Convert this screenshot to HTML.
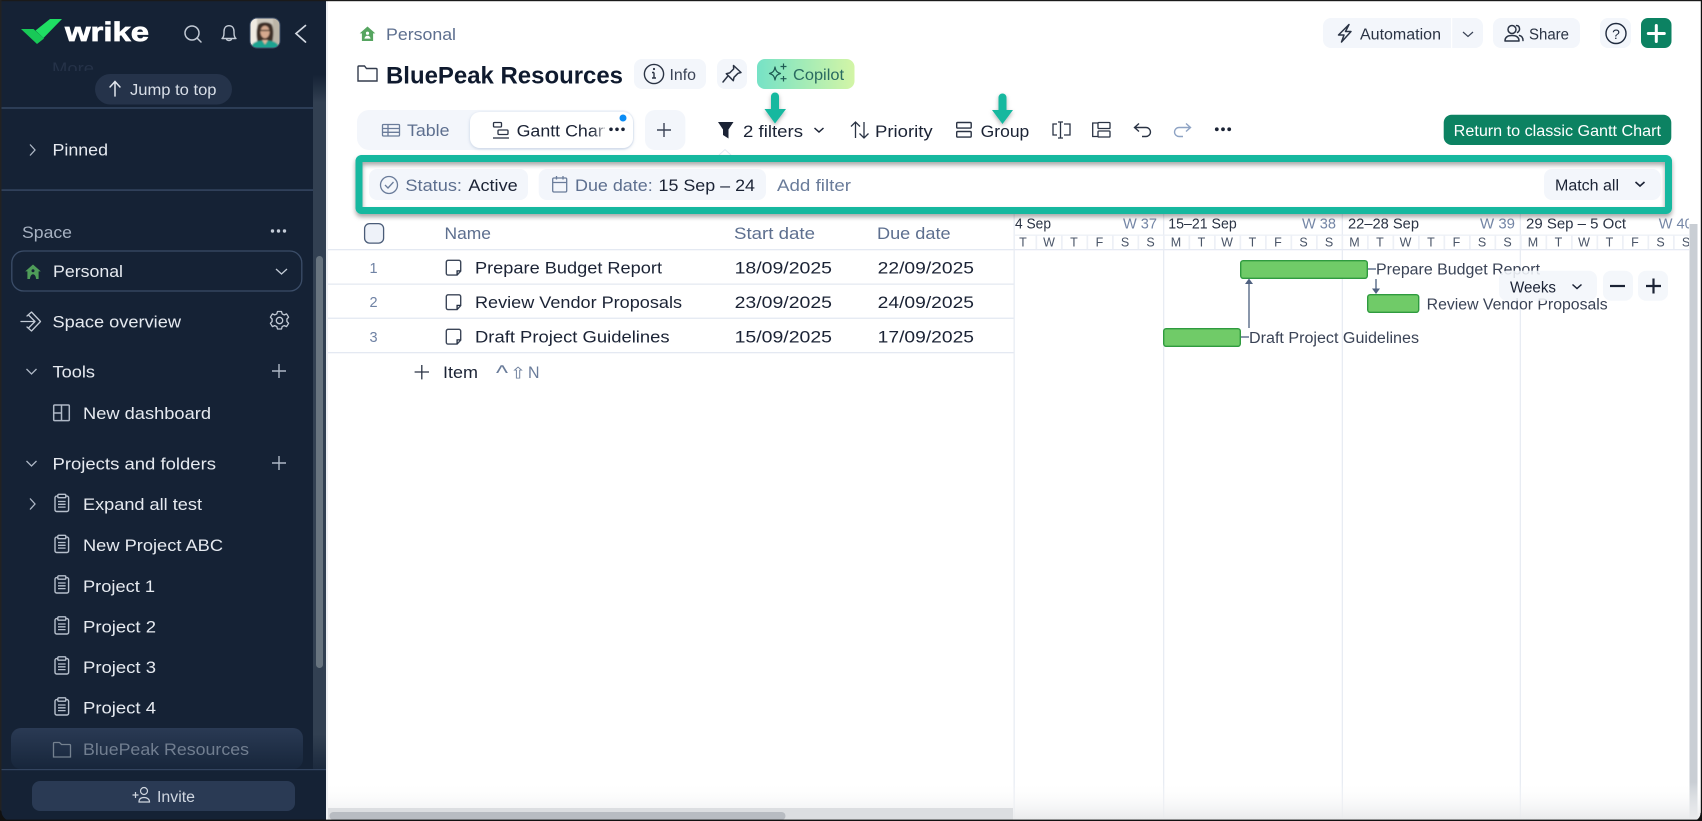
<!DOCTYPE html>
<html><head><meta charset="utf-8"><title>BluePeak Resources</title>
<style>
html,body{margin:0;padding:0;background:#111;width:1702px;height:821px;overflow:hidden}
svg{display:block}
text{font-family:"Liberation Sans","DejaVu Sans",sans-serif;font-size:16.6px;fill:#1b2335}
.s{fill:#e6eaf0}
.m{fill:#5d6f8f}
.d{font-size:12.5px;fill:#4a5568;text-anchor:middle}
.h{font-size:14.5px;fill:#2a3344}
.w{font-size:14.5px;fill:#7486a6}
.g{font-size:15.5px;fill:#3a4356}
.ic{fill:none;stroke:#2a3344;stroke-width:1.5;stroke-linecap:round;stroke-linejoin:round}
.num{fill:#6f82a4;font-size:14.5px;text-anchor:middle}
</style></head><body>
<svg width="1702" height="821" viewBox="0 0 1702 821" xmlns="http://www.w3.org/2000/svg">
<defs>
<symbol id="clip" width="16" height="19" viewBox="0 0 16 19" overflow="visible">
<rect x="1" y="2.6" width="13.6" height="15.4" rx="1.6" fill="none" stroke="#b7c0cd" stroke-width="1.4"/>
<rect x="3.8" y=".8" width="8" height="3.4" rx="1" fill="#152235" stroke="#b7c0cd" stroke-width="1.4"/>
<path d="M4 8h7.6M4 10.8h7.6M4 13.6h7.6" stroke="#b7c0cd" stroke-width="1.3"/>
</symbol>
<symbol id="note" width="17" height="17" viewBox="0 0 17 17" overflow="visible">
<path d="M2.6.8H13.4a1.8 1.8 0 0 1 1.8 1.8V11.600L11.600 15.600H2.600A1.800 1.800 0 0 1 .8 13.800V2.600A1.800 1.800 0 0 1 2.600.8Z" fill="none" stroke="#3c4658" stroke-width="1.400"/>
<path d="M15 11.400H11.600V15.400" fill="none" stroke="#1f2a3e" stroke-width="1.300"/>
</symbol>
<symbol id="house" width="16" height="16" viewBox="0 0 16 16" overflow="visible">
<path d="M8 .5 15.800 7.400H13.600V15H2.400V7.400H.2Z" fill="#56a560"/>
<circle cx="8" cy="7.200" r="1.600" fill="#fff"/><path d="M4.900 12.600c.4-2 1.600-2.900 3.100-2.900s2.700.9 3.100 2.900Z" fill="#fff"/>
</symbol>
<symbol id="house2" width="16" height="16" viewBox="0 0 16 16" overflow="visible">
<path d="M8 .5 15.800 7.400H13.600V15H2.400V7.400H.2Z" fill="#4f9d59"/>
<circle cx="8" cy="6.800" r="1.500" fill="#152235"/><path d="M4.900 15c.3-3 1.500-4.800 3.100-4.800s2.800 1.800 3.100 4.800Z" fill="#152235"/>
</symbol>
<pattern id="days" patternUnits="userSpaceOnUse" x="1163" y="0" width="25.500" height="10"><rect width="1.700" height="10" fill="#edf0f6"/></pattern>
<linearGradient id="cop" x1="0" x2="1" y1="0" y2="0"><stop offset="0" stop-color="#76e2c6"/><stop offset="1" stop-color="#d3f5a6"/></linearGradient>
<linearGradient id="trk" x1="0" x2="0" y1="0" y2="1"><stop offset="0" stop-color="#152235"/><stop offset=".04" stop-color="#324052"/><stop offset=".95" stop-color="#324052"/><stop offset="1" stop-color="#1c2a3e"/></linearGradient>
<linearGradient id="sel" x1="0" x2="0" y1="0" y2="1"><stop offset="0" stop-color="#2a3a54"/><stop offset="1" stop-color="#17263b"/></linearGradient>
<linearGradient id="fade" x1="0" x2="1" y1="0" y2="0"><stop offset="0" stop-color="#fff" stop-opacity="0"/><stop offset="1" stop-color="#fff"/></linearGradient>
<linearGradient id="bot" x1="0" x2="0" y1="0" y2="1"><stop offset="0" stop-color="#fff" stop-opacity="0"/><stop offset="1" stop-color="#e9eaec"/></linearGradient>
<clipPath id="gc"><rect x="1014" y="214" width="675" height="40"/></clipPath>
<clipPath id="more"><rect x="40" y="62" width="80" height="9"/></clipPath>
<clipPath id="av"><rect x="250" y="18" width="30" height="30" rx="7"/></clipPath>
<filter id="sh" x="-5%" y="-30%" width="110%" height="170%"><feDropShadow dx="0" dy="3" stdDeviation="2.500" flood-color="#000" flood-opacity=".35"/></filter>
<filter id="sh2" x="-50%" y="-30%" width="200%" height="170%"><feDropShadow dx="0" dy="2" stdDeviation="2" flood-color="#000" flood-opacity=".3"/></filter>
<filter id="tb" x="-5%" y="-10%" width="110%" height="125%"><feDropShadow dx="0" dy="1" stdDeviation="1.500" flood-color="#8aa0c4" flood-opacity=".45"/></filter>
<filter id="bl"><feGaussianBlur stdDeviation=".7"/></filter>
</defs>

<rect x="1" y="1" width="1700" height="819" fill="#fff"/>

<!-- Sidebar -->
<rect x="1.500" y="1" width="325" height="819" fill="#152235"/>
<rect x="326" y="1" width="2" height="819" fill="#eef0f3"/>
<rect x="313" y="75" width="13" height="694" fill="url(#trk)"/>
<rect x="316" y="256" width="7" height="412" rx="3.500" fill="#68747f"/>
<path d="M21 29H33.500L44 38.500 37 44Z" fill="#18c957"/>
<path d="M50 19H62L43.500 38 35.500 30.500Z" fill="#1fdf63"/>
<text x="65" y="41" textLength="84" lengthAdjust="spacingAndGlyphs" style="font-size:27px;font-weight:700;fill:#fff;stroke:#fff;stroke-width:.7">wrike</text>
<circle cx="192" cy="33" r="7" fill="none" stroke="#c2cad5" stroke-width="1.500"/><path d="M197 38 201 42" stroke="#c2cad5" stroke-width="1.500" stroke-linecap="round"/>
<path d="M222 38.500c2-1.500 2-4 2-7 0-3.500 1.800-5.800 5-5.800s5 2.300 5 5.800c0 3 0 5.500 2 7ZM226.500 39c.4 2 4.600 2 5 0" fill="none" stroke="#c2cad5" stroke-width="1.400" stroke-linejoin="round"/>
<g clip-path="url(#av)"><g filter="url(#bl)">
<rect x="248" y="16" width="34" height="34" fill="#cfc9bd"/>
<rect x="248" y="16" width="9" height="34" fill="#efeae2"/>
<rect x="273" y="16" width="8" height="34" fill="#bdb6a8"/>
<path d="M258 44c-2-8-2-14 0-19 2-3.500 12-3.500 14 0 2 5 1.500 11 0 19Z" fill="#3d2d25"/>
<ellipse cx="265" cy="32" rx="4.600" ry="6.200" fill="#d6a98e"/>
<path d="M260.500 30.500h9" stroke="#2b2018" stroke-width="1.200"/>
<path d="M250 50c1-8 7-9.500 15-9.500S279 42 280 50Z" fill="#1fa391"/>
<path d="M262 40 265 44.500l3-4.500Z" fill="#e2b89d"/>
</g></g>
<rect x="250" y="18" width="30" height="30" rx="7" fill="none" stroke="#3d4d66" stroke-width="1"/>
<path d="M305.500 25.500 296 33.500l9.500 8.500" fill="none" stroke="#d3d9e2" stroke-width="1.700" stroke-linecap="round"/>

<g clip-path="url(#more)"><text x="52" y="74" textLength="42" lengthAdjust="spacingAndGlyphs" style="fill:#253248">More</text></g>
<rect x="95" y="74" width="137" height="30.500" rx="15.200" fill="#25334a"/>
<path d="M115 96V82M110 87l5-5.500 5 5.500" fill="none" stroke="#e2e6ed" stroke-width="1.500" stroke-linecap="round"/>
<text class="s" x="130" y="95" textLength="86.500" lengthAdjust="spacingAndGlyphs" style="font-size:15.400px;fill:#d9dfe8">Jump to top</text>
<rect x="1.500" y="107.200" width="311.500" height="1.600" fill="#33445f"/>
<path d="M30 144.500 35 150l-5 5.500" fill="none" stroke="#aeb8c6" stroke-width="1.300"/>
<text class="s" x="52.500" y="155.500" textLength="55.500" lengthAdjust="spacingAndGlyphs">Pinned</text>
<rect x="1.500" y="189.300" width="311.500" height="1.600" fill="#33445f"/>
<text x="22" y="238" textLength="50" lengthAdjust="spacingAndGlyphs" style="fill:#a7b2c2">Space</text>
<circle cx="272.500" cy="231" r="1.700" fill="#c4ccd8"/><circle cx="278.500" cy="231" r="1.700" fill="#c4ccd8"/><circle cx="284.500" cy="231" r="1.700" fill="#c4ccd8"/>
<rect x="11.800" y="251" width="290" height="40" rx="12" fill="none" stroke="#3b4d68" stroke-width="1.300"/>
<use href="#house2" x="25" y="264"/>
<text class="s" x="53" y="277" textLength="70" lengthAdjust="spacingAndGlyphs">Personal</text>
<path d="M276 269l5.500 5 5.500-5" fill="none" stroke="#c2cad5" stroke-width="1.300"/>
<path d="M21 321.500H34.500M29 315.500l6 6-6 6M27 316 31.500 312 40.500 321.500 31.500 331 27 327" fill="none" stroke="#c2cad5" stroke-width="1.300" stroke-linejoin="round" stroke-linecap="round"/>
<text class="s" x="52.500" y="327.500" textLength="128.500" lengthAdjust="spacingAndGlyphs">Space overview</text>
<g fill="none" stroke="#c2cad5" stroke-width="1.300"><circle cx="279.500" cy="320.500" r="3.200"/><path d="M277.500 311.500h4l.7 2.400 2.100 1 2.300-1 2 3.300-1.700 1.800v2.500l1.700 1.800-2 3.300-2.300-1-2.100 1-.7 2.400h-4l-.7-2.400-2.100-1-2.300 1-2-3.300 1.700-1.800v-2.500l-1.700-1.800 2-3.300 2.300 1 2.100-1Z" stroke-linejoin="round"/></g>
<path d="M26.500 369l5 5 5-5" fill="none" stroke="#aeb8c6" stroke-width="1.300"/>
<text class="s" x="52.500" y="377.500" textLength="42.500" lengthAdjust="spacingAndGlyphs">Tools</text>
<path d="M272 371h14M279 364v14" stroke="#aeb8c6" stroke-width="1.400"/>
<g fill="none" stroke="#aeb8c6" stroke-width="1.500"><rect x="53.700" y="405" width="15.600" height="15.600" rx="1"/><path d="M61.500 405v15.600M53.700 413h7.800"/></g>
<text class="s" x="83" y="419" textLength="128" lengthAdjust="spacingAndGlyphs">New dashboard</text>
<path d="M26.500 461l5 5 5-5" fill="none" stroke="#aeb8c6" stroke-width="1.300"/>
<text class="s" x="52.500" y="469.500" textLength="163.500" lengthAdjust="spacingAndGlyphs">Projects and folders</text>
<path d="M272 463h14M279 456v14" stroke="#aeb8c6" stroke-width="1.400"/>
<path d="M30 498.500 35 504l-5 5.500" fill="none" stroke="#aeb8c6" stroke-width="1.300"/>
<use href="#clip" x="54" y="493.500"/><text class="s" x="83" y="510" textLength="119" lengthAdjust="spacingAndGlyphs">Expand all test</text>
<use href="#clip" x="54" y="534.500"/><text class="s" x="83" y="551" textLength="140" lengthAdjust="spacingAndGlyphs">New Project ABC</text>
<use href="#clip" x="54" y="575"/><text class="s" x="83" y="592" textLength="72" lengthAdjust="spacingAndGlyphs">Project 1</text>
<use href="#clip" x="54" y="616"/><text class="s" x="83" y="632.500" textLength="73" lengthAdjust="spacingAndGlyphs">Project 2</text>
<use href="#clip" x="54" y="656"/><text class="s" x="83" y="673" textLength="73" lengthAdjust="spacingAndGlyphs">Project 3</text>
<use href="#clip" x="54" y="697"/><text class="s" x="83" y="713.500" textLength="73" lengthAdjust="spacingAndGlyphs">Project 4</text>
<rect x="11" y="728" width="292" height="41" rx="10" fill="url(#sel)"/>
<path d="M53.500 757V743.500a1 1 0 0 1 1-1h5l2 2h8a1 1 0 0 1 1 1V757Z" fill="none" stroke="#74818f" stroke-width="1.300"/>
<text x="83" y="755" textLength="166" lengthAdjust="spacingAndGlyphs" style="fill:#717e90">BluePeak Resources</text>
<rect x="1.500" y="769" width="324.500" height="1.200" fill="#33445f"/>
<rect x="32" y="781" width="263" height="30" rx="8" fill="#2a3a54"/>
<path d="M132.500 795h6M135.500 792v6" stroke="#cfd5de" stroke-width="1.200"/><circle cx="144" cy="791" r="3.500" fill="none" stroke="#cfd5de" stroke-width="1.200"/><path d="M139 802c0-3 2-4.500 5-4.500s5.500 1.500 5.500 4.500Z" fill="none" stroke="#cfd5de" stroke-width="1.200"/>
<text x="157" y="802" textLength="38" lengthAdjust="spacingAndGlyphs" style="fill:#cfd6e0;font-size:15.500px">Invite</text>

<!-- Header -->
<use href="#house" x="359.500" y="26"/>
<text class="m" x="386" y="40" textLength="70" lengthAdjust="spacingAndGlyphs">Personal</text>
<path d="M358 81V67a1 1 0 0 1 1-1h5.500l2 2.500H376a1 1 0 0 1 1 1V81Z" fill="none" stroke="#333c4d" stroke-width="1.400"/>
<text x="386" y="83.500" textLength="237" lengthAdjust="spacingAndGlyphs" style="font-size:24.500px;font-weight:700;fill:#0f1a2e">BluePeak Resources</text>
<rect x="634" y="59" width="72" height="30" rx="8" fill="#f3f6fb"/>
<circle cx="654" cy="74" r="9.600" fill="none" stroke="#2a3344" stroke-width="1.400"/><path d="M654 72.500v5.500M652 72.500h2M652 78h4" stroke="#2a3344" stroke-width="1.400" fill="none"/><circle cx="654" cy="69" r="1.100" fill="#2a3344"/>
<text x="669.500" y="80" textLength="26.500" lengthAdjust="spacingAndGlyphs" style="font-size:15.500px;fill:#3a4356">Info</text>
<rect x="717" y="59" width="30" height="30" rx="8" fill="#f3f6fb"/>
<path d="M733.500 65.500l7.500 7-3 .8-4 4-.7 3.400-7-7 3.400-.8 4-4ZM727.500 76.500 723 82" class="ic" stroke-width="1.300"/>
<rect x="757" y="59" width="97.500" height="30" rx="8" fill="url(#cop)"/>
<path d="M775 67c.7 4 2 5.500 5.500 6.500-3.500 1-4.800 2.500-5.500 6.500-.7-4-2-5.500-5.500-6.500 3.500-1 4.800-2.500 5.500-6.500ZM783.500 63.500v6M780.500 66.500h6M783.500 76v5.500M780.500 78.700h6" fill="none" stroke="#1f5b54" stroke-width="1.200" stroke-linejoin="round"/>
<text x="793" y="80" textLength="51" lengthAdjust="spacingAndGlyphs" style="font-size:15.500px;fill:#2a6a60">Copilot</text>

<rect x="1323" y="18" width="160" height="30" rx="8" fill="#f3f6fb"/><rect x="1451" y="18" width="1.200" height="30" fill="#fff"/>
<path d="M1349 24.500 1338.500 35h5.500l-2.500 7 9.500-10.500h-5.500Z" class="ic" stroke-width="1.300"/>
<text x="1360" y="39.500" textLength="81" lengthAdjust="spacingAndGlyphs" style="font-size:15.500px;fill:#2a3344">Automation</text>
<path d="M1463 32l5 4.500 5-4.500" fill="none" stroke="#3a4356" stroke-width="1.200"/>
<rect x="1493" y="18" width="87" height="30" rx="8" fill="#f3f6fb"/>
<circle cx="1512" cy="29.500" r="4" class="ic" stroke-width="1.300"/><path d="M1505 41c0-4 3-5.500 7-5.500s7 1.500 7 5.500ZM1516.500 25.500c3 0 4.500 4.500 1 7M1519.500 35.500c2 .5 3.500 2 3.500 5" class="ic" stroke-width="1.300"/>
<text x="1529" y="39.500" textLength="40" lengthAdjust="spacingAndGlyphs" style="font-size:15.500px;fill:#2a3344">Share</text>
<rect x="1600" y="18" width="31" height="30" rx="8" fill="#f3f6fb"/>
<circle cx="1616" cy="33.500" r="10" fill="none" stroke="#1f2a3e" stroke-width="1.400"/>
<text x="1616" y="39" text-anchor="middle" style="font-size:14px;fill:#1f2a3e">?</text>
<rect x="1641" y="18" width="30.500" height="30" rx="7" fill="#0c8262"/>
<path d="M1656.300 25.500v16M1648.300 33.500h16" stroke="#fff" stroke-width="3" stroke-linecap="round"/>

<!-- Tabs + toolbar -->
<rect x="357" y="110" width="277" height="40" rx="12" fill="#f3f6fb"/>
<g fill="none" stroke="#6a7c9a" stroke-width="1.300"><rect x="382.500" y="124.500" width="17" height="11.500" rx="1"/><path d="M382.500 128.500h17M382.500 132.300h17M388 124.500V136"/></g>
<text x="407" y="136" textLength="42.500" lengthAdjust="spacingAndGlyphs" style="fill:#5d6f8f">Table</text>
<rect x="470" y="112" width="163" height="36" rx="10" fill="#fff" filter="url(#tb)"/>
<g fill="none" stroke="#2a3344" stroke-width="1.300"><rect x="493.500" y="122.500" width="8" height="4.500" rx="1"/><rect x="498" y="130" width="10" height="4.500" rx="1"/><path d="M493 138h16"/></g>
<text x="516.600" y="136.500" textLength="92" lengthAdjust="spacingAndGlyphs">Gantt Chart</text>
<rect x="592" y="122" width="18" height="20" fill="url(#fade)"/><rect x="605" y="120" width="22" height="22" fill="#fff"/>
<circle cx="611" cy="129.300" r="1.800" fill="#1b2335"/><circle cx="617" cy="129.300" r="1.800" fill="#1b2335"/><circle cx="623" cy="129.300" r="1.800" fill="#1b2335"/>
<circle cx="623" cy="118" r="3.500" fill="#0a8cf5"/>
<rect x="645" y="110" width="40.400" height="40" rx="10" fill="#f3f6fb"/>
<path d="M657 130h14M664 123v14" stroke="#3a4356" stroke-width="1.400"/>
<path d="M718 122H733.500L728.500 129.500V138.500L723 135V129.500Z" fill="#1b2335"/>
<text x="743" y="136.800" textLength="60" lengthAdjust="spacingAndGlyphs">2 filters</text>
<path d="M814.500 128l4.500 4 4.500-4" fill="none" stroke="#1b2335" stroke-width="1.500"/>
<path d="M855.500 138V122M851 126.500l4.500-4.500 4.500 4.500M864 122v16M859.500 133.500l4.500 4.500 4.500-4.500" fill="none" stroke="#2a3344" stroke-width="1.300"/>
<text x="875" y="136.800" textLength="57.700" lengthAdjust="spacingAndGlyphs">Priority</text>
<g fill="none" stroke="#2a3344" stroke-width="1.400"><rect x="956.700" y="122.500" width="14.500" height="5.600" rx="1"/><rect x="956.700" y="131.500" width="14.500" height="5.600" rx="1"/></g>
<text x="980.700" y="136.800" textLength="48.600" lengthAdjust="spacingAndGlyphs">Group</text>
<g fill="none" stroke="#2a3344" stroke-width="1.300"><path d="M1057 124h-4v11h4M1064 124h6v11h-6M1060.500 122v16M1058 122h5M1058 138h5"/></g>
<g fill="none" stroke="#2a3344" stroke-width="1.300"><path d="M1098 123h-5.300v13.500H1098"/><rect x="1098" y="122.500" width="12" height="6" rx=".8"/><rect x="1098" y="131" width="12" height="6" rx=".8"/></g>
<path d="M1139 123.500l-4.500 4 4.500 4M1135 127.500h11a4.500 4.500 0 0 1 0 9h-4" fill="none" stroke="#2a3344" stroke-width="1.400"/>
<path d="M1186 123.500l4.500 4-4.500 4M1190 127.500h-11a4.500 4.500 0 0 0 0 9h4" fill="none" stroke="#8ea3c4" stroke-width="1.400"/>
<circle cx="1216.800" cy="129.300" r="1.900" fill="#1b2335"/><circle cx="1223" cy="129.300" r="1.900" fill="#1b2335"/><circle cx="1229.200" cy="129.300" r="1.900" fill="#1b2335"/>
<rect x="1443.700" y="114.700" width="227.600" height="30.300" rx="8" fill="#0c8262"/>
<text x="1453.700" y="136" textLength="207.300" lengthAdjust="spacingAndGlyphs" style="font-size:15.400px;fill:#fff">Return to classic Gantt Chart</text>

<!-- Filter chips -->
<path d="M719 155 725 149.500 731 155" fill="#fff" stroke="#e4e9f2"/>
<rect x="369" y="169" width="159" height="31" rx="8" fill="#f3f6fb"/>
<circle cx="389" cy="185" r="8.500" fill="none" stroke="#6a7c9a" stroke-width="1.300"/><path d="M385 185l3 3 5.500-6" fill="none" stroke="#6a7c9a" stroke-width="1.300"/>
<text class="m" x="405.400" y="190.800" textLength="56.600" lengthAdjust="spacingAndGlyphs">Status:</text>
<text x="468.400" y="190.800" textLength="49.300" lengthAdjust="spacingAndGlyphs">Active</text>
<rect x="538.700" y="169" width="227.300" height="31" rx="8" fill="#f3f6fb"/>
<g fill="none" stroke="#6a7c9a" stroke-width="1.300"><rect x="552.700" y="178" width="14" height="14" rx="1.200"/><path d="M552.700 182.500h14M556.500 176v3.500M563 176v3.500"/></g>
<text class="m" x="575" y="190.800" textLength="77.700" lengthAdjust="spacingAndGlyphs">Due date:</text>
<text x="658.500" y="190.800" textLength="96.500" lengthAdjust="spacingAndGlyphs">15 Sep – 24</text>
<text class="m" x="777" y="190.800" textLength="74" lengthAdjust="spacingAndGlyphs" style="fill:#6a7c9a">Add filter</text>
<rect x="1544" y="169" width="116.700" height="31" rx="8" fill="#f3f6fb"/>
<text x="1555" y="190.300" textLength="64" lengthAdjust="spacingAndGlyphs" style="font-size:15.500px">Match all</text>
<path d="M1635.500 182l4.500 4 4.500-4" fill="none" stroke="#1b2335" stroke-width="1.600"/>

<!-- Table -->
<rect x="364.600" y="223.600" width="19" height="19.500" rx="5" fill="#eef2f9" stroke="#4a5c78" stroke-width="1.300"/>
<text class="m" x="444.500" y="238.800" textLength="46.500" lengthAdjust="spacingAndGlyphs">Name</text>
<text class="m" x="734" y="238.800" textLength="81" lengthAdjust="spacingAndGlyphs">Start date</text>
<text class="m" x="877" y="238.800" textLength="73.600" lengthAdjust="spacingAndGlyphs">Due date</text>
<g fill="#e4e9f2"><rect x="328" y="249" width="686" height="1.300"/><rect x="328" y="283.500" width="686" height="1.300"/><rect x="328" y="317.600" width="686" height="1.300"/><rect x="328" y="352" width="686" height="1.300"/></g>
<text class="num" x="373.500" y="272.800">1</text><text class="num" x="373.500" y="307.200">2</text><text class="num" x="373.500" y="342">3</text>
<use href="#note" x="445.500" y="259.500"/><use href="#note" x="445.500" y="294"/><use href="#note" x="445.500" y="328.500"/>
<text x="475" y="273.500" textLength="187" lengthAdjust="spacingAndGlyphs">Prepare Budget Report</text>
<text x="475" y="308" textLength="207" lengthAdjust="spacingAndGlyphs">Review Vendor Proposals</text>
<text x="475" y="342.500" textLength="194.600" lengthAdjust="spacingAndGlyphs">Draft Project Guidelines</text>
<text x="734.600" y="273.500" textLength="97.400" lengthAdjust="spacingAndGlyphs">18/09/2025</text><text x="877.700" y="273.500" textLength="96.300" lengthAdjust="spacingAndGlyphs">22/09/2025</text>
<text x="734.600" y="308" textLength="97.400" lengthAdjust="spacingAndGlyphs">23/09/2025</text><text x="877.700" y="308" textLength="96.300" lengthAdjust="spacingAndGlyphs">24/09/2025</text>
<text x="734.600" y="342.500" textLength="97.400" lengthAdjust="spacingAndGlyphs">15/09/2025</text><text x="877.700" y="342.500" textLength="96.300" lengthAdjust="spacingAndGlyphs">17/09/2025</text>
<path d="M414.600 372h14.400M421.800 365v14.400" stroke="#2a3344" stroke-width="1.300"/>
<text x="443" y="378" textLength="35" lengthAdjust="spacingAndGlyphs">Item</text>
<text x="496" y="380" textLength="12" lengthAdjust="spacingAndGlyphs" style="font-size:21px;fill:#6a7c9a">^</text>
<text x="510" y="378.500" textLength="16" lengthAdjust="spacingAndGlyphs" style="font-size:16px;fill:#6a7c9a">⇧</text>
<text x="528" y="378" textLength="11.500" lengthAdjust="spacingAndGlyphs" style="fill:#6a7c9a">N</text>

<!-- Gantt -->
<g fill="#e8ecf3">
<rect x="1013.500" y="214" width="1.300" height="606"/><rect x="1163" y="214" width="1.300" height="606"/><rect x="1341.700" y="214" width="1.300" height="606"/><rect x="1519.700" y="214" width="1.300" height="606"/>
</g>
<rect x="1014" y="234.500" width="675" height="1.300" fill="#edf0f6"/><rect x="1014" y="249" width="675" height="1.300" fill="#e6eaf3"/>
<rect x="1014" y="235" width="675" height="14" fill="url(#days)"/>
<g clip-path="url(#gc)">
<text class="h" x="1015" y="228.600" textLength="36" lengthAdjust="spacingAndGlyphs">4 Sep</text>
<text class="w" x="1123" y="228.600" textLength="34" lengthAdjust="spacingAndGlyphs">W 37</text>
<text class="h" x="1168.300" y="228.600" textLength="68.400" lengthAdjust="spacingAndGlyphs">15–21 Sep</text>
<text class="w" x="1302" y="228.600" textLength="34" lengthAdjust="spacingAndGlyphs">W 38</text>
<text class="h" x="1348" y="228.600" textLength="71" lengthAdjust="spacingAndGlyphs">22–28 Sep</text>
<text class="w" x="1480" y="228.600" textLength="35" lengthAdjust="spacingAndGlyphs">W 39</text>
<text class="h" x="1526" y="228.600" textLength="100" lengthAdjust="spacingAndGlyphs">29 Sep – 5 Oct</text>
<text class="w" x="1658.700" y="228.600" textLength="34" lengthAdjust="spacingAndGlyphs">W 40</text>
<text class="d" x="1023" y="246.500">T</text><text class="d" x="1049" y="246.500">W</text><text class="d" x="1074" y="246.500">T</text><text class="d" x="1099.500" y="246.500">F</text><text class="d" x="1125" y="246.500">S</text><text class="d" x="1150.500" y="246.500">S</text>
<text class="d" x="1176" y="246.500">M</text><text class="d" x="1201.500" y="246.500">T</text><text class="d" x="1227" y="246.500">W</text><text class="d" x="1252.500" y="246.500">T</text><text class="d" x="1278" y="246.500">F</text><text class="d" x="1303.500" y="246.500">S</text><text class="d" x="1329" y="246.500">S</text>
<text class="d" x="1354.500" y="246.500">M</text><text class="d" x="1380" y="246.500">T</text><text class="d" x="1405.500" y="246.500">W</text><text class="d" x="1431" y="246.500">T</text><text class="d" x="1456.500" y="246.500">F</text><text class="d" x="1482" y="246.500">S</text><text class="d" x="1507.500" y="246.500">S</text>
<text class="d" x="1533" y="246.500">M</text><text class="d" x="1558.500" y="246.500">T</text><text class="d" x="1584" y="246.500">W</text><text class="d" x="1609.500" y="246.500">T</text><text class="d" x="1635" y="246.500">F</text><text class="d" x="1660.500" y="246.500">S</text><text class="d" x="1686" y="246.500">S</text>
</g>
<g fill="#70cb68" stroke="#2f9b3f" stroke-width="1.400">
<rect x="1240.700" y="260.700" width="126.600" height="17.600" rx="2.500"/>
<rect x="1367.700" y="294.700" width="51" height="17.600" rx="2.500"/>
<rect x="1163.700" y="328.700" width="76.600" height="17.600" rx="2.500"/>
</g>
<path d="M1249 328V282M1241 337h8M1368 269h8M1376 279v10" stroke="#64758f" stroke-width="1.500" fill="none"/>
<path d="M1249 278.500 1245 284H1253Z" fill="#4f6180"/><path d="M1376 294 1372 288.500H1380Z" fill="#4f6180"/>
<text class="g" x="1376" y="274.500" textLength="164" lengthAdjust="spacingAndGlyphs">Prepare Budget Report</text>
<text class="g" x="1426.700" y="309.500" textLength="181" lengthAdjust="spacingAndGlyphs">Review Vendor Proposals</text>
<text class="g" x="1249" y="343" textLength="170" lengthAdjust="spacingAndGlyphs">Draft Project Guidelines</text>
<rect x="1499" y="270.700" width="98" height="30" rx="8" fill="#f3f6fb" fill-opacity=".88"/>
<text x="1510" y="292.300" textLength="46" lengthAdjust="spacingAndGlyphs" style="font-size:15.500px">Weeks</text>
<path d="M1572.500 284.500l4.500 4 4.500-4" fill="none" stroke="#1b2335" stroke-width="1.500"/>
<rect x="1603" y="270.700" width="30" height="30" rx="8" fill="#f3f6fb" fill-opacity=".9"/>
<path d="M1610 286h15" stroke="#1b2335" stroke-width="2.200"/>
<rect x="1638" y="270.700" width="30" height="30" rx="8" fill="#f3f6fb" fill-opacity=".9"/>
<path d="M1646 286h15M1653.500 278.500v15" stroke="#1b2335" stroke-width="2.200"/>

<!-- Scrollbars & bottom fade -->
<rect x="1689.500" y="224" width="8" height="596" fill="#c9ced4"/>
<rect x="328" y="782" width="1373" height="38" fill="url(#bot)"/>
<rect x="328" y="808" width="685" height="12" fill="#dcdee1"/>
<rect x="329.500" y="812" width="456" height="8" rx="4" fill="#b8bcc2"/>

<!-- Highlight frame and arrows -->
<rect x="359" y="158.500" width="1309.500" height="52" rx="2.500" fill="none" stroke="#12b89f" stroke-width="7" filter="url(#sh)"/>
<g fill="#12b89f" filter="url(#sh2)">
<path d="M771 96.500a4 4 0 0 1 8 0V109h7L775 123.500 764.500 109H771Z"/>
<path d="M998.500 97.500a4 4 0 0 1 8 0V110h6.500L1002.500 124 992 110h6.500Z"/>
</g>

<!-- Window edge -->
<rect x="0" y="0" width="1702" height="1.200" fill="#1a1a1a"/>
<rect x="0" y="0" width="1.500" height="821" fill="#222"/>
<rect x="1700.800" y="0" width="1.200" height="821" fill="#111"/>
<rect x="0" y="819.600" width="1702" height="1.400" fill="#111"/>
<path d="M0 810V821H11A10 10 0 0 1 1.500 811.500Z" fill="#111"/>
<path d="M1702 812V821H1693A8 8 0 0 0 1700.500 813Z" fill="#111"/>
</svg>
</body></html>
